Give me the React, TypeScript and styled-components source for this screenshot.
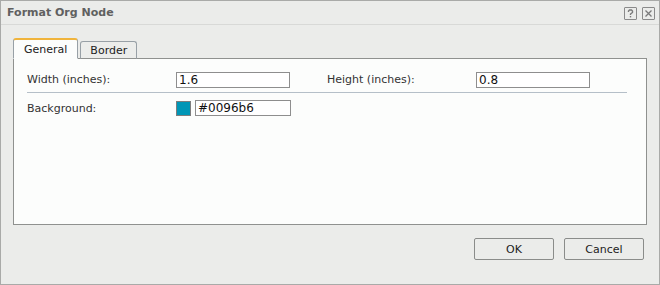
import React from 'react';
import styled, { createGlobalStyle } from 'styled-components';

const GlobalStyle = createGlobalStyle`
  html, body {
    margin: 0;
    padding: 0;
    background: #ebecea;
  }
  * {
    box-sizing: border-box;
  }
`;

const Dialog = styled.div`
  width: 660px;
  height: 285px;
  border: 1px solid #a9aaa8;
  background: #ebecea;
  font-family: 'DejaVu Sans', Verdana, sans-serif;
  font-size: 11px;
  color: #2b2b2b;
  display: flex;
  flex-direction: column;
`;

const TitleBar = styled.div`
  height: 24px;
  border-bottom: 1px solid #d8d9d7;
  display: flex;
  align-items: center;
  justify-content: space-between;
  padding: 0 4px 0 6px;
`;

const Title = styled.div`
  font-weight: bold;
  font-size: 11px;
  color: #606060;
`;

const TitleButtons = styled.div`
  display: flex;
  gap: 5px;
  margin-top: 2px;
`;

const IconBox = styled.div`
  width: 13px;
  height: 13px;
  border: 1px solid #8a8a8a;
  border-radius: 1px;
  display: flex;
  align-items: center;
  justify-content: center;
`;

const Body = styled.div`
  flex: 1;
  padding: 12px 12px 0 12px;
  display: flex;
  flex-direction: column;
`;

const TabStrip = styled.div`
  display: flex;
  align-items: flex-end;
  gap: 2px;
  height: 21px;
  position: relative;
  z-index: 1;
`;

const Tab = styled.div<{ $active?: boolean }>`
  height: ${(p) => (p.$active ? '21px' : '18px')};
  padding: 0 ${(p) => (p.$active ? '10px' : '9px')};
  display: flex;
  align-items: center;
  font-size: 11px;
  color: #222;
  border: 1px solid #98a0a6;
  border-bottom: ${(p) => (p.$active ? '1px solid #fcfdfc' : '1px solid #8f918f')};
  border-top: ${(p) => (p.$active ? '2px solid #f0b43c' : '1px solid #98a0a6')};
  border-radius: 3px 3px 0 0;
  background: ${(p) => (p.$active ? '#fcfdfc' : '#ecedeb')};
  margin-bottom: -1px;
`;

const Panel = styled.div`
  width: 634px;
  height: 167px;
  border: 1px solid #8f918f;
  background: #fcfdfc;
  padding: 12px 12px 0 13px;
`;

const Row = styled.div<{ $divider?: boolean }>`
  display: flex;
  align-items: center;
  height: ${(p) => (p.$divider ? '22px' : '20px')};
  border-bottom: ${(p) => (p.$divider ? '1px solid #b5bfc8' : 'none')};
  width: 600px;
  padding-bottom: ${(p) => (p.$divider ? '4px' : '0')};
  margin-bottom: ${(p) => (p.$divider ? '5px' : '0')};
`;

const Label = styled.div<{ $width: number }>`
  width: ${(p) => p.$width}px;
  flex-shrink: 0;
  color: #333;
`;

const TextInput = styled.div<{ $width: number }>`
  width: ${(p) => p.$width}px;
  height: 16px;
  border: 1px solid #8e8e8e;
  background: #fff;
  padding: 0 2px;
  font-size: 12px;
  line-height: 14px;
  color: #111;
`;

const Swatch = styled.div<{ $color: string }>`
  width: 15px;
  height: 15px;
  border: 1px solid #7d7d7d;
  background: ${(p) => p.$color};
  margin-right: 4px;
`;

const Footer = styled.div`
  display: flex;
  justify-content: flex-end;
  gap: 10px;
  padding: 13px 3px 0 0;
`;

const Button = styled.button`
  width: 80px;
  height: 22px;
  border: 1px solid #8a8c8a;
  border-radius: 2px;
  background: #ebecea;
  font-family: 'DejaVu Sans', Verdana, sans-serif;
  font-size: 11px;
  color: #222;
  padding: 0;
`;

export default function App() {
  return (
    <>
      <GlobalStyle />
      <Dialog>
        <TitleBar>
          <Title>Format Org Node</Title>
          <TitleButtons>
            <IconBox>
              <svg width="9" height="9" viewBox="0 0 9 9">
                <path d="M2.5 3 V2 L3.5 1 H5.5 L6.5 2 V3.5 L4.5 5 V6" fill="none" stroke="#7a7a7a" strokeWidth="1.4" />
                <rect x="3.8" y="7" width="1.4" height="1.4" fill="#7a7a7a" />
              </svg>
            </IconBox>
            <IconBox>
              <svg width="9" height="9" viewBox="0 0 9 9">
                <path d="M1.5 1.5 L7.5 7.5 M7.5 1.5 L1.5 7.5" stroke="#7a7a7a" strokeWidth="1.3" />
              </svg>
            </IconBox>
          </TitleButtons>
        </TitleBar>
        <Body>
          <TabStrip>
            <Tab $active>General</Tab>
            <Tab>Border</Tab>
          </TabStrip>
          <Panel>
            <Row $divider>
              <Label $width={149}>Width (inches):</Label>
              <TextInput $width={114}>1.6</TextInput>
              <Label $width={149} style={{ marginLeft: 37 }}>Height (inches):</Label>
              <TextInput $width={114}>0.8</TextInput>
            </Row>
            <Row>
              <Label $width={149}>Background:</Label>
              <Swatch $color="#0096b6" />
              <TextInput $width={96}>#0096b6</TextInput>
            </Row>
          </Panel>
          <Footer>
            <Button>OK</Button>
            <Button>Cancel</Button>
          </Footer>
        </Body>
      </Dialog>
    </>
  );
}
